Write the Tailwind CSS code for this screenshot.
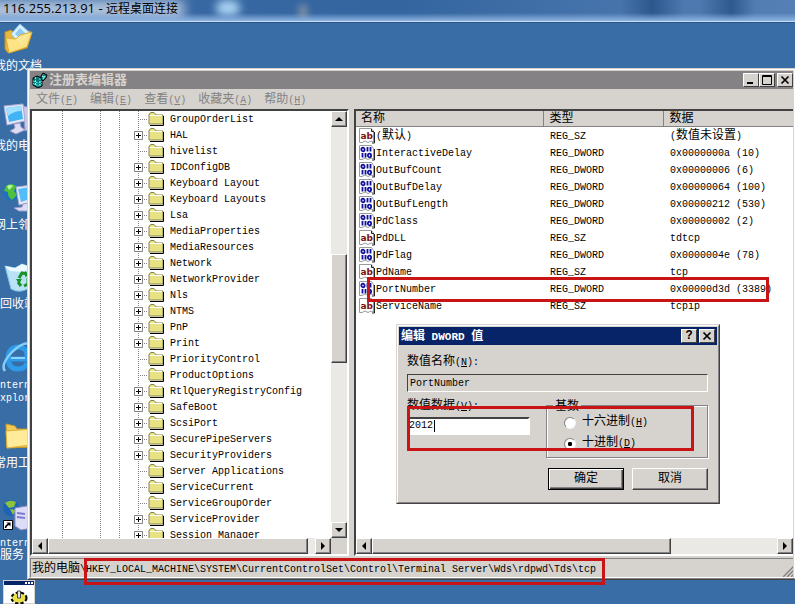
<!DOCTYPE html>
<html lang="zh-CN">
<head>
<meta charset="utf-8">
<meta name="viewport" content="width=device-width, initial-scale=1">
<title>116.255.213.91 - 远程桌面连接</title>
<script src="https://cdn.jsdelivr.net/npm/@tailwindcss/browser@4"></script>
</head>
<body class="h-screen overflow-hidden bg-[#396da5] font-['Liberation_Mono','Noto_Sans_CJK_SC',monospace] text-xs text-black">

<!-- icons -->
<svg class="hidden" aria-hidden="true">
    <symbol id="folder" viewBox="0 0 16 14">
        <path d="M1 3V12H15V3H8L7 1.500L6 .5H3L1.500 1.500Z" fill="#e7e384" stroke="#848252"/>
        <path d="M2 3.500H14" stroke="#fffff0"/>
        <path d="M2 13.500H15.500V4" fill="none" stroke="#000"/>
    </symbol>
    <symbol id="reg_sz" viewBox="0 0 16 16">
        <path d="M.5 14.500V.5H12.500L14.500 3.500V14L12 13L9 14.500L6 13L3 14.500Z" fill="#fff" stroke="#9a9a9a"/>
        <path d="M15.500 4V15H13M12.500 1V3.500H15" fill="none" stroke="#222"/>
        <text x="1.500" y="10.500" font-family="DejaVu Sans" font-weight="700" font-size="9" fill="#7c1010">ab</text>
    </symbol>
    <symbol id="reg_dword" viewBox="0 0 16 16">
        <path d="M.5 14.500V.5H12.500L14.500 3.500V14L12 13L9 14.500L6 13L3 14.500Z" fill="#fff" stroke="#9a9a9a"/>
        <path d="M15.500 4V15H13" fill="none" stroke="#222"/>
        <g fill="none" stroke="#10109c" stroke-width="1.800">
            <ellipse cx="4" cy="4.500" rx="1.600" ry="1.800"/>
            <path d="M8.500 2V6.500M11.500 2V6.500M3.500 8V12.500M6.500 8V12.500"/>
            <ellipse cx="10.500" cy="10.500" rx="1.600" ry="1.800"/>
        </g>
    </symbol>
    <symbol id="regedit" viewBox="0 0 16 16">
        <path d="M1 6L5 4L10 6V14L6 16L1 13Z" fill="#087878" stroke="#000"/>
        <path d="M1 9L6 11L10 9M1 11.500L6 13.500L10 11.500M3.500 5V14M8 6V15" stroke="#5ff" fill="none" stroke-dasharray="2 1"/>
        <path d="M9 4L11 1L13 2L15 3L14 6L11 9L9 7Z" fill="#108484" stroke="#000"/>
        <path d="M10 4L12 5M11 7L13 4" stroke="#bff"/>
    </symbol>
    <symbol id="documents" viewBox="0 0 32 32">
        <path d="M3 9L9 7L12 10L28 8L29 13L25 25L6 30L3 26Z" fill="#e9b73b" stroke="#c48a20"/>
        <path d="M9 11L18 1L28 10L19 22Z" fill="#d8f1ff" stroke="#8fc3e8"/>
        <path d="M13 11L18 5L24 11L19 16Z" fill="#8cc8f0"/>
        <path d="M4 15L14 16L18 12L30 9L25 24L7 30Z" fill="#ffe88c" fill-opacity=".9" stroke="#e0ae38"/>
    </symbol>
    <symbol id="computer" viewBox="0 0 32 32">
        <path d="M21 3L30 5V26L23 28Z" fill="#c9c8ec" stroke="#9593c4"/>
        <path d="M2 3L21 1L23 18L5 22Z" fill="#e6e8f8" stroke="#a6acd4"/>
        <path d="M4 5L19 3L21 16L7 19Z" fill="#41b4f5"/>
        <path d="M4 5L19 3L19.500 8Q12 8 6 13Z" fill="#9ee0ff"/>
        <path d="M12 21L18 20L19 24L23 27L14 31L8 28L13 25Z" fill="#dcdcf4" stroke="#9d9bc8"/>
    </symbol>
    <symbol id="network" viewBox="0 0 32 32">
        <circle cx="10" cy="10" r="8.500" fill="#1b6fc8"/>
        <path d="M4 4Q9 0 14 4L12 9L15 13L10 18Q5 14 6 10L2 9Z" fill="#4fc03a"/>
        <path d="M5 4Q9 2 11 4L7 8Z" fill="#c3f2a0"/>
        <path d="M14 5L30 3V20L17 23Z" fill="#e6e8f8" stroke="#a6acd4"/>
        <path d="M16 7L28 5V17L19 20Z" fill="#53bdf7"/>
        <path d="M21 22L27 21V25L30 29H17L12 26L20 25Z" fill="#dcdcf4" stroke="#9d9bc8"/>
    </symbol>
    <symbol id="recycle" viewBox="0 0 32 32">
        <path d="M3 5L13 7L20 3L31 7L27 27Q18 33 9 28Z" fill="#b9e2f6" stroke="#7fc0e6"/>
        <path d="M3 5L13 7L20 3L31 7L20 11L8 10Z" fill="#ecf9ff"/>
        <g fill="none" stroke="#18922a" stroke-width="3">
            <path d="M17 17L20 12L25 13M26 17L26 23L22 25M19 25L16 21"/>
        </g>
        <path d="M23 10L28 14L23 16ZM14 18L20 18L17 23Z" fill="#18922a"/>
    </symbol>
    <symbol id="ie" viewBox="0 0 32 32">
        <path d="M8 18H25Q26 6 16 6Q6 7 6 18Q7 28 16 28Q23 28 25 22" fill="none" stroke="#2d9be8" stroke-width="5"/>
        <path d="M9 17H23" stroke="#8fd4ff" stroke-width="2"/>
        <path d="M3 30Q-2 24 10 11Q22 0 29 3" fill="none" stroke="#86cdfa" stroke-width="2.500"/>
    </symbol>
    <symbol id="tools" viewBox="0 0 32 32">
        <path d="M4 4L13 6L15 9L30 9V27L5 28Z" fill="#f2cb55" stroke="#c99a2a"/>
        <path d="M4 11L30 9L29 25L5 28Z" fill="#ffeb9a" stroke="#dcb040"/>
    </symbol>
    <symbol id="iis" viewBox="0 0 32 32">
        <circle cx="9" cy="9" r="8" fill="#1c62b8"/>
        <path d="M3 4Q8 0 14 3L12 8L7 9ZM8 10L14 11L11 16Z" fill="#8bc43c"/>
        <path d="M13 9L25 7L30 10V29L19 31L13 27Z" fill="#dddcf6" stroke="#918fc4"/>
        <path d="M15 14L23 15M15 18L23 19" stroke="#7d7bd0" stroke-width="2"/>
        <path d="M1.500 21.500H10.500V30.500H1.500Z" fill="#fff" stroke="#000"/>
        <path d="M3.500 29Q3.500 26.500 7 25" fill="none" stroke="#000" stroke-width="1.500"/>
        <path d="M4.500 23.500H8.500V27.500Z"/>
    </symbol>
    <symbol id="min" viewBox="0 0 12 10"><path d="M2 8H8" stroke="#000" stroke-width="2"/></symbol>
    <symbol id="max" viewBox="0 0 12 10"><path d="M1.500 .5H10.500V9.500H1.500ZM1 1.500H11" fill="none" stroke="#000"/></symbol>
    <symbol id="close" viewBox="0 0 12 10"><path d="M2.500 1.500L9.500 8.500M9.500 1.500L2.500 8.500" stroke="#000" stroke-width="1.700"/></symbol>
    <symbol id="up" viewBox="0 0 8 8"><path d="M0 6H8L4 2Z"/></symbol>
    <symbol id="down" viewBox="0 0 8 8"><path d="M0 2H8L4 6Z"/></symbol>
    <symbol id="left" viewBox="0 0 8 8"><path d="M6 0V8L2 4Z"/></symbol>
    <symbol id="right" viewBox="0 0 8 8"><path d="M2 0V8L6 4Z"/></symbol>
</svg>

<div class="relative flex h-full flex-col overflow-hidden">
    <header class="relative h-[22px] shrink-0 overflow-hidden border-b border-[#c4dcf4] bg-linear-to-r from-[#3b6ba6] via-[#34659f] to-[#5580b5]">
        <div class="absolute inset-0 bg-linear-to-r from-transparent from-78% via-[#1f4a80]/70 via-82% to-transparent to-86%"></div>
        <div class="absolute inset-0 bg-linear-to-r from-transparent from-88% via-[#1f4a80]/70 via-92% to-transparent to-95%"></div>
        <div class="absolute top-0 -left-4 h-5 w-[200px] bg-[#bccde3]/90 blur-[6px]"></div>
        <div class="absolute top-0 left-[216px] h-4 w-6 rounded-full bg-[#b4dcfa]/90 blur-[4px]"></div>
        <div class="absolute top-1 left-[298px] h-4 w-2.5 rounded-full bg-[#9aa0a4]/60 blur-[3px]"></div>
        <div class="absolute inset-x-0 bottom-0 h-2 bg-linear-to-b from-transparent to-[#8db4e2]"></div>
        <h1 class="relative pl-[3px] font-['Open_Sans','Noto_Sans_CJK_SC',sans-serif] text-xs leading-4"><span class="text-[13px]">116.255.213.91 - </span>远程桌面连接</h1>
    </header>

    <main class="relative flex-1 overflow-hidden border-t border-[#2c5585]">
        <div id="desktop" class="text-white"></div>

        <!-- registry editor -->
        <section class="absolute top-[45px] -right-px bottom-6 left-[27px] flex flex-col border border-[#d6d3ce] border-b-[#424142] bg-[#d6d3ce]">
            <div class="flex flex-1 flex-col overflow-hidden border border-white border-b-[#848284] px-px pt-px">
                <div class="flex h-[18px] shrink-0 items-center bg-[#848284] pl-0.5 text-[#d6d3ce]">
                    <svg class="size-4"><use href="#regedit"/></svg>
                    <h2 class="ml-px flex-1 pt-0.5 text-[13px] leading-4 font-bold">注册表编辑器</h2>
                    <button aria-label="最小化" class="flex h-3.5 w-4 items-center justify-center border border-white border-r-[#424142] border-b-[#424142] bg-[#d6d3ce]"><svg class="h-2.5 w-3"><use href="#min"/></svg></button>
                    <button aria-label="最大化" class="flex h-3.5 w-4 items-center justify-center border border-white border-r-[#424142] border-b-[#424142] bg-[#d6d3ce]"><svg class="h-2.5 w-3"><use href="#max"/></svg></button>
                    <button aria-label="关闭" class="ml-0.5 flex h-3.5 w-4 items-center justify-center border border-white border-r-[#424142] border-b-[#424142] bg-[#d6d3ce]"><svg class="h-2.5 w-3"><use href="#close"/></svg></button>
                </div>
                <nav class="flex h-5 shrink-0 items-center gap-3 pt-0.5 pl-1.5 leading-4 text-[#848284]">
                    <button>文件<span class="text-[10px]">(<u>F</u>)</span></button>
                    <button>编辑<span class="text-[10px]">(<u>E</u>)</span></button>
                    <button>查看<span class="text-[10px]">(<u>V</u>)</span></button>
                    <button>收藏夹<span class="text-[10px]">(<u>A</u>)</span></button>
                    <button>帮助<span class="text-[10px]">(<u>H</u>)</span></button>
                </nav>

                <div class="flex min-h-0 flex-1 gap-[5px]">
                    <div class="grid w-[319px] shrink-0 grid-cols-[1fr_16px] grid-rows-[1fr_16px] border-2 border-[#424142] border-r-white border-b-white bg-white">
                        <ul id="tree" class="relative min-h-0 overflow-hidden"></ul>
                        <div class="flex flex-col bg-[#ebe9e6]">
                            <button aria-label="向上滚动" class="flex h-4 items-center justify-center border border-white border-r-[#424142] border-b-[#424142] bg-[#d6d3ce] shadow-[inset_-1px_-1px_#848284]"><svg class="size-2"><use href="#up"/></svg></button>
                            <div class="flex-[128]"></div>
                            <div class="flex-[108] border border-white border-r-[#424142] border-b-[#424142] bg-[#d6d3ce] shadow-[inset_-1px_-1px_#848284]"></div>
                            <div class="flex-[160]"></div>
                            <button aria-label="向下滚动" class="flex h-4 items-center justify-center border border-white border-r-[#424142] border-b-[#424142] bg-[#d6d3ce] shadow-[inset_-1px_-1px_#848284]"><svg class="size-2"><use href="#down"/></svg></button>
                        </div>
                        <div class="flex bg-[#ebe9e6]">
                            <button aria-label="向左滚动" class="flex w-4 items-center justify-center border border-white border-r-[#424142] border-b-[#424142] bg-[#d6d3ce] shadow-[inset_-1px_-1px_#848284]"><svg class="size-2"><use href="#left"/></svg></button>
                            <div class="flex-[260] border border-white border-r-[#424142] border-b-[#424142] bg-[#d6d3ce] shadow-[inset_-1px_-1px_#848284]"></div>
                            <div class="flex-[7]"></div>
                            <button aria-label="向右滚动" class="flex w-4 items-center justify-center border border-white border-r-[#424142] border-b-[#424142] bg-[#d6d3ce] shadow-[inset_-1px_-1px_#848284]"><svg class="size-2"><use href="#right"/></svg></button>
                        </div>
                        <div class="bg-[#d6d3ce]"></div>
                    </div>

                    <div class="flex min-w-0 flex-1 flex-col border-2 border-r-0 border-[#424142] border-b-white bg-white">
                        <div class="min-h-0 flex-1 overflow-hidden">
                            <table class="w-full table-fixed border-collapse">
                                <thead>
                                    <tr class="bg-[#d6d3ce] text-left leading-[14px]">
                                        <th class="w-[187px] border-r border-b border-[#848284] p-0 pt-px pl-[5px] font-normal">名称</th>
                                        <th class="w-[120px] border-r border-b border-l border-[#848284] border-l-white p-0 pt-px pl-1.5 font-normal">类型</th>
                                        <th class="border-b border-l border-[#848284] border-l-white p-0 pt-px pl-1.5 font-normal">数据</th>
                                    </tr>
                                </thead>
                                <tbody id="values"></tbody>
                            </table>
                        </div>
                        <div class="flex h-4 bg-[#ebe9e6]">
                            <button aria-label="向左滚动" class="flex w-4 items-center justify-center border border-white border-r-[#424142] border-b-[#424142] bg-[#d6d3ce] shadow-[inset_-1px_-1px_#848284]"><svg class="size-2"><use href="#left"/></svg></button>
                            <div class="flex-[300] border border-white border-r-[#424142] border-b-[#424142] bg-[#d6d3ce] shadow-[inset_-1px_-1px_#848284]"></div>
                            <div class="flex-[107]"></div>
                            <button aria-label="向右滚动" class="flex w-4 items-center justify-center border border-white border-r-[#424142] border-b-[#424142] bg-[#d6d3ce] shadow-[inset_-1px_-1px_#848284]"><svg class="size-2"><use href="#right"/></svg></button>
                        </div>
                    </div>
                </div>

                <footer class="mt-0.5 flex h-5 shrink-0 items-center justify-between border border-[#848284] border-r-0 border-b-white pl-px leading-4 whitespace-nowrap">
                    <p class="pt-0.5">我的电脑<span class="text-[10px]">\HKEY_LOCAL_MACHINE\SYSTEM\CurrentControlSet\Control\Terminal Server\Wds\rdpwd\Tds\tcp</span></p>
                    <svg class="h-3 w-2.5 self-end" viewBox="0 0 10 12"><path d="M0 12L11 1M4 12L11 5M8 12L11 9" stroke="#848284" stroke-width="1.500"/></svg>
                </footer>
            </div>
        </section>

        <!-- DWORD dialog -->
        <form role="dialog" aria-label="编辑 DWORD 值" class="absolute top-[301px] left-[396px] w-[324px] border border-[#d6d3ce] border-r-[#424142] border-b-[#424142] bg-[#d6d3ce]">
            <div class="border border-white border-r-[#848284] border-b-[#848284] p-px pb-3">
                <div class="flex h-[18px] items-center gap-0.5 bg-[#082469] px-0.5 text-white">
                    <h2 class="flex-1 pt-0.5 leading-4 font-bold">编辑<span class="text-[11px]"> DWORD </span>值</h2>
                    <button type="button" aria-label="帮助" class="flex h-3.5 w-4 items-center justify-center border border-white border-r-[#424142] border-b-[#424142] bg-[#d6d3ce] text-xs font-bold text-black">?</button>
                    <button type="button" aria-label="关闭" class="flex h-3.5 w-4 items-center justify-center border border-white border-r-[#424142] border-b-[#424142] bg-[#d6d3ce]"><svg class="h-2.5 w-3"><use href="#close"/></svg></button>
                </div>
                <div class="pt-[9px] pr-[9px] pl-2">
                    <label for="name" class="block leading-4">数值名称<span class="text-[10px]">(<u>N</u>):</span></label>
                    <input id="name" readonly value="PortNumber" class="mt-[3px] block h-[18px] w-full border border-[#424142] border-r-white border-b-white bg-[#d6d3ce] pl-0.5 text-[10px]">
                    <div class="mt-1.5 flex justify-between">
                        <div>
                            <label for="data" class="block leading-4">数值数据<span class="text-[10px]">(<u>V</u>):</span></label>
                            <div class="mt-0.5 flex h-[18px] w-[123px] items-center border-2 border-[#424142] border-r-white border-b-white bg-white">
                                <input id="data" value="2012" class="w-[26px] border-r border-black text-[10px] leading-3 outline-none">
                            </div>
                        </div>
                        <fieldset class="relative mt-[7px] h-[53px] w-[162px] border border-[#848284] shadow-[1px_1px_white,inset_1px_1px_white]">
                            <legend class="absolute -top-[7px] left-1.5 bg-[#d6d3ce] px-0.5 leading-4">基数</legend>
                            <div class="flex flex-col gap-1 pt-2 pl-[17px]">
                                <label class="flex items-center gap-1.5 leading-4"><input type="radio" name="base" class="size-3 appearance-none rounded-full border border-[#848284] border-r-[#f4f4f4] border-b-[#f4f4f4] bg-white">
                                    <span>十六进制<span class="text-[10px]">(<u>H</u>)</span></span></label>
                                <label class="flex items-center gap-1.5 leading-4"><input type="radio" name="base" checked class="size-3 appearance-none rounded-full border border-[#848284] border-r-[#f4f4f4] border-b-[#f4f4f4] bg-white bg-radial from-black from-25% to-white to-35%">
                                    <span>十进制<span class="text-[10px]">(<u>D</u>)</span></span></label>
                            </div>
                        </fieldset>
                    </div>
                    <div class="mt-2.5 flex justify-end gap-2">
                        <button type="button" class="h-[22px] w-[76px] border border-black bg-[#d6d3ce] shadow-[inset_1px_1px_white,inset_-1px_-1px_#424142,inset_-2px_-2px_#848284]">确定</button>
                        <button type="button" class="h-[22px] w-[76px] border border-white border-r-[#424142] border-b-[#424142] bg-[#d6d3ce] shadow-[inset_-1px_-1px_#848284]">取消</button>
                    </div>
                </div>
            </div>
        </form>

        <!-- highlight marks -->
        <div class="pointer-events-none absolute top-[254px] left-[367px] h-[25px] w-[402px] border-3 border-[#c81414]"></div>
        <div class="pointer-events-none absolute top-[383px] left-[407px] h-[45px] w-[287px] border-3 border-[#c81414]"></div>
        <div class="pointer-events-none absolute top-[535px] left-[84px] h-[27px] w-[521px] border-3 border-[#c81414]"></div>

        <!-- minimized window -->
        <div class="absolute bottom-0 left-[3px] h-6 w-8 border border-[#d6d3ce] bg-white">
            <div class="flex h-1 items-center justify-end gap-px bg-[#082469] pr-px">
                <i class="size-0.5 bg-white"></i><i class="size-0.5 bg-white"></i><i class="size-0.5 bg-white"></i>
            </div>
            <svg class="mx-auto mt-1 h-4 w-5" viewBox="0 0 20 16">
                <ellipse cx="10" cy="9" rx="7" ry="5" fill="#d6cf38" stroke="#000" stroke-width="3" stroke-dasharray="3 2"/>
                <ellipse cx="10" cy="9" rx="6.500" ry="4.500" fill="#e7e04a"/>
                <path d="M8.500 2H11.500V9H8.500Z" fill="#e8e8e8" stroke="#444"/>
            </svg>
        </div>
    </main>
</div>

<script>
    const desktop = [
        ["documents", 0, "我的文档"],
        ["computer", 80, "我的电脑"],
        ["network", 159, "网上邻居"],
        ["recycle", 238, "回收站"],
        ["ie", 318, "<span class='text-[10px]'>Internet<br>Explorer</span>"],
        ["tools", 397, "常用工具"],
        ["iis", 476, "<span class='text-[10px]'>Internet</span><br>服务<span class='text-[10px]'> (</span>"],
    ];
    document.querySelector("#desktop").innerHTML = desktop.map(([icon, top, label]) => `
        <div class="absolute -left-2.5 flex w-14 flex-col items-center" style="top: ${top}px">
            <svg class="size-8 shrink-0"><use href="#${icon}"/></svg>
            <p class="mt-1.5 text-center leading-3 whitespace-nowrap">${label}</p>
        </div>`).join("");

    // "+" marks keys that have subkeys
    const keys = ["GroupOrderList", "+HAL", "hivelist", "+IDConfigDB", "+Keyboard Layout", "+Keyboard Layouts", "+Lsa",
        "+MediaProperties", "+MediaResources", "+Network", "+NetworkProvider", "+Nls", "+NTMS", "+PnP", "+Print",
        "PriorityControl", "ProductOptions", "+RtlQueryRegistryConfig", "+SafeBoot", "+ScsiPort", "+SecurePipeServers",
        "+SecurityProviders", "Server Applications", "ServiceCurrent", "ServiceGroupOrder", "+ServiceProvider", "+Session Manager"];
    const line = `<i class="h-4 w-px bg-[repeating-linear-gradient(#848284_0_1px,transparent_1px_2px)]"></i>`;
    document.querySelector("#tree").innerHTML = keys.map(key => `
        <li class="flex h-4 items-center pl-[30px] text-[10px] whitespace-nowrap">
            <span class="flex w-[38px]">${line}</span>
            <span class="flex w-[19px]">${line}</span>
            <span class="flex w-[19px]">${line}</span>
            <span class="relative flex w-2.5 items-center">
                ${line}
                <i class="h-px flex-1 bg-[repeating-linear-gradient(90deg,transparent_0_1px,#848284_1px_2px)]"></i>
                ${key[0] === "+" ? `<svg class="absolute -left-1 size-[9px]" viewBox="0 0 9 9"><path d="M.5 .5H8.500V8.500H.5Z" fill="#fff" stroke="#848284"/><path d="M2 4.500H7M4.500 2V7" stroke="#000"/></svg>` : ""}
            </span>
            <svg class="h-3.5 w-4"><use href="#folder"/></svg>
            <span class="ml-1.5 pt-0.5">${key.replace("+", "")}</span>
        </li>`).join("");

    const values = [
        ["(默认)", "REG_SZ", "(数值未设置)"],
        ["InteractiveDelay", "REG_DWORD", "0x0000000a (10)"],
        ["OutBufCount", "REG_DWORD", "0x00000006 (6)"],
        ["OutBufDelay", "REG_DWORD", "0x00000064 (100)"],
        ["OutBufLength", "REG_DWORD", "0x00000212 (530)"],
        ["PdClass", "REG_DWORD", "0x00000002 (2)"],
        ["PdDLL", "REG_SZ", "tdtcp"],
        ["PdFlag", "REG_DWORD", "0x0000004e (78)"],
        ["PdName", "REG_SZ", "tcp"],
        ["PortNumber", "REG_DWORD", "0x00000d3d (3389)"],
        ["ServiceName", "REG_SZ", "tcpip"],
    ];
    const text = s => s.replace(/[\u4e00-\u9fff]+/g, "<span class='text-xs leading-3'>$&</span>");
    document.querySelector("#values").innerHTML = values.map(([name, type, data]) => `
        <tr class="h-[17px] text-[10px] leading-[15px] whitespace-nowrap">
            <td class="p-0 pl-[3px]"><div class="flex h-[17px] items-center gap-px"><svg class="size-4"><use href="#${type === "REG_SZ" ? "reg_sz" : "reg_dword"}"/></svg><span class="pt-0.5">${text(name)}</span></div></td>
            <td class="p-0 pt-0.5 pl-[7px]">${type}</td>
            <td class="p-0 pt-0.5 pl-[7px]">${text(data)}</td>
        </tr>`).join("");
</script>
</body>
</html>
